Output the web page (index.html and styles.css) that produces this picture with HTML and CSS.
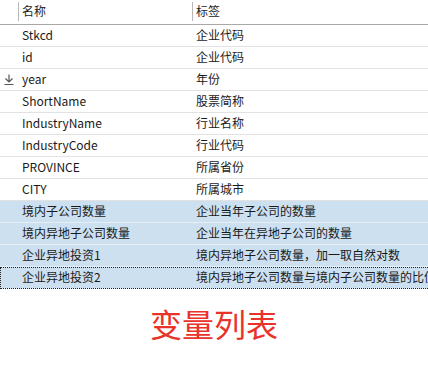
FILE: index.html
```html
<!DOCTYPE html>
<html lang="zh">
<head>
<meta charset="utf-8">
<link rel="stylesheet" href="styles.css">
</head>
<body>
<div class="list">
  <div class="header">
    <div class="hcell c1"><span class="sep"></span>名称</div>
    <div class="hcell c2"><span class="sep"></span>标签</div>
  </div>
  <div class="row"><div class="cell c1">Stkcd</div><div class="cell c2">企业代码</div></div>
  <div class="row"><div class="cell c1">id</div><div class="cell c2">企业代码</div></div>
  <div class="row"><div class="cell c1"><svg class="icon" width="10" height="11" viewBox="0 0 10 11"><path d="M5 0.5V8M1.5 4.5L5 8L8.5 4.5M0.5 10.5H9.5" fill="none" stroke="#555" stroke-width="1.2"/></svg>year</div><div class="cell c2">年份</div></div>
  <div class="row"><div class="cell c1">ShortName</div><div class="cell c2">股票简称</div></div>
  <div class="row"><div class="cell c1">IndustryName</div><div class="cell c2">行业名称</div></div>
  <div class="row"><div class="cell c1">IndustryCode</div><div class="cell c2">行业代码</div></div>
  <div class="row"><div class="cell c1">PROVINCE</div><div class="cell c2">所属省份</div></div>
  <div class="row"><div class="cell c1">CITY</div><div class="cell c2">所属城市</div></div>
  <div class="row sel"><div class="cell c1">境内子公司数量</div><div class="cell c2">企业当年子公司的数量</div></div>
  <div class="row sel"><div class="cell c1">境内异地子公司数量</div><div class="cell c2">企业当年在异地子公司的数量</div></div>
  <div class="row sel"><div class="cell c1">企业异地投资1</div><div class="cell c2">境内异地子公司数量，加一取自然对数</div></div>
  <div class="row sel focus"><div class="cell c1">企业异地投资2</div><div class="cell c2">境内异地子公司数量与境内子公司数量的比值</div></div>
</div>
<div class="caption">变量列表</div>
</body>
</html>
```
FILE: styles.css
```css
* { box-sizing: border-box; }
html, body { margin: 0; padding: 0; background: #fff; }
body {
  width: 428px;
  height: 380px;
  overflow: hidden;
  font-family: "Noto Sans CJK SC", "Noto Sans", sans-serif;
  font-size: 12px;
  color: #1a1a1a;
}
.list { width: 428px; overflow: hidden; }
.header {
  display: flex;
  height: 25px;
  border-bottom: 1px solid #a8a8a8;
}
.hcell {
  position: relative;
  display: flex;
  align-items: center;
  white-space: nowrap;
  color: #222;
  padding-bottom: 3px;
  line-height: 16px;
}
.hcell.c1 { width: 192px; padding-left: 22px; }
.hcell.c2 { flex: 1; padding-left: 4px; }
.sep {
  position: absolute;
  top: 2px;
  bottom: 3px;
  width: 1px;
  background: #b8b8b8;
}
.hcell.c1 .sep { left: 18px; }
.hcell.c2 .sep { left: 0; }
.row {
  display: flex;
  height: 22px;
  border-bottom: 1px solid #e2e2e2;
  white-space: nowrap;
}
.cell {
  display: flex;
  align-items: center;
  overflow: hidden;
  line-height: 16px;
  padding-bottom: 2px;
}
.cell.c1 { width: 192px; padding-left: 22px; position: relative; }
.cell.c2 { flex: 1; padding-left: 4px; min-width: 0; }
.icon { position: absolute; left: 4px; top: 5px; }
.row.sel { background: #cde0f0; border-bottom-color: #e6eef6; }
.row.focus {
  outline: 1px dotted #222;
  outline-offset: -1px;
  width: 440px;
}
.caption {
  text-align: center;
  color: #e8322a;
  font-size: 32px;
  margin-top: 12px;
  line-height: 44px;
}
```
